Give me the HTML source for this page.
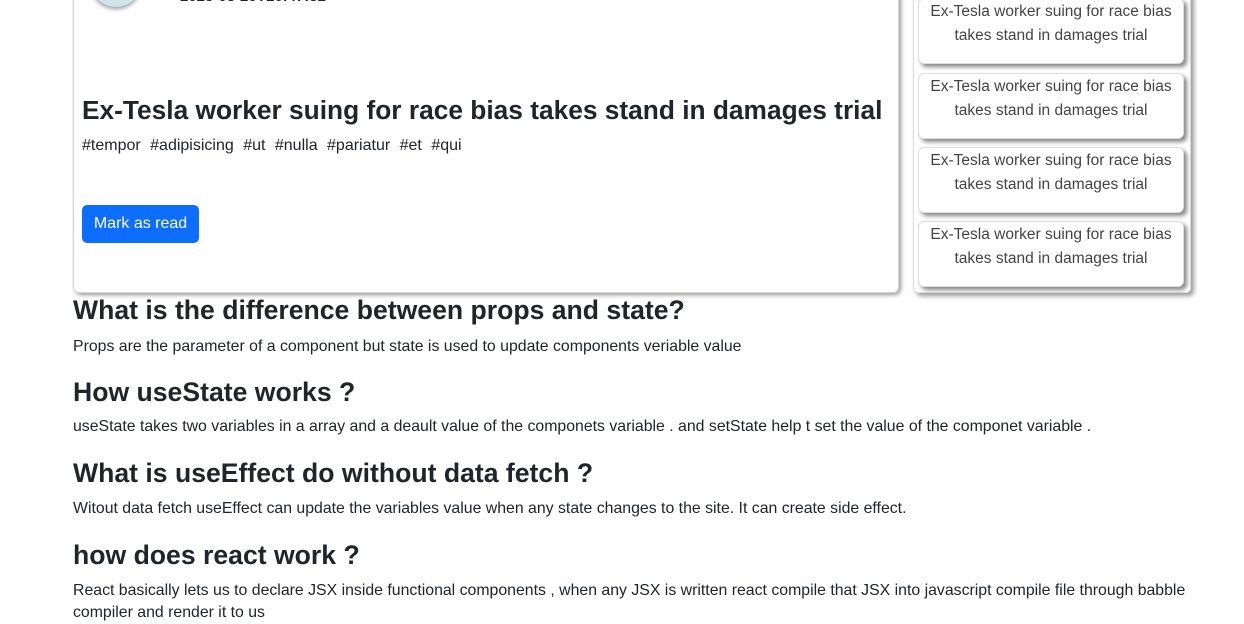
<html><head><style>
body{margin:0;width:1244px;height:619px;overflow:hidden;font-family:"Liberation Sans",sans-serif;color:#212529;background:#fff;position:relative}
.card{position:absolute;left:73px;top:-20px;width:824px;height:311px;border:1px solid #d6d6d6;border-radius:6px;box-shadow:2px 2px 4px #999}
.av{position:absolute;left:90px;top:-45px;width:52px;height:52px;border-radius:50%;background:#cfe3ec;box-shadow:0 2px 4px #999}
.date{position:absolute;left:180px;top:-12px;font-size:15px;font-weight:bold}
h1{position:absolute;left:82px;top:95px;margin:0;font-size:26.3px;font-weight:bold}
.tags{position:absolute;left:82px;top:137px;font-size:16px;word-spacing:5px}
.btn{position:absolute;left:82px;top:205px;width:117px;height:38px;background:#0d6efd;color:#fff;border-radius:5px;font-size:16px;line-height:38px;text-align:center}
.side{position:absolute;left:913px;top:-10px;width:276px;height:301px;border:1px solid #ddd;border-radius:5px;box-shadow:3px 3px 5px #999}
.it{position:absolute;left:918px;width:264px;height:64px;border:1px solid #ddd;border-radius:6px;box-shadow:3px 3px 4px #888;text-align:center;font-size:15.5px;line-height:24px;color:#444;background:#fff}
.it span{display:block;padding-top:1px}
h2{position:absolute;left:73px;margin:0;font-size:26.6px;font-weight:bold}
p{position:absolute;left:73px;margin:0;font-size:15.85px;width:1135px;line-height:22px}
</style></head><body>
<div class="card"></div>
<div class="av"></div>
<div class="date">2023-03-25T16:47:32</div>
<h1>Ex-Tesla worker suing for race bias takes stand in damages trial</h1>
<div class="tags">#tempor #adipisicing #ut #nulla #pariatur #et #qui</div>
<div class="btn">Mark as read</div>
<div class="side"></div>
<div class="it" style="top:-2px"><span>Ex-Tesla worker suing for race bias<br>takes stand in damages trial</span></div>
<div class="it" style="top:73px"><span>Ex-Tesla worker suing for race bias<br>takes stand in damages trial</span></div>
<div class="it" style="top:147px"><span>Ex-Tesla worker suing for race bias<br>takes stand in damages trial</span></div>
<div class="it" style="top:221px"><span>Ex-Tesla worker suing for race bias<br>takes stand in damages trial</span></div>
<h2 style="top:295px">What is the difference between props and state?</h2>
<p style="top:336px">Props are the parameter of a component but state is used to update components veriable value</p>
<h2 style="top:377px">How useState works ?</h2>
<p style="top:416px">useState takes two variables in a array and a deault value of the componets variable . and setState help t set the value of the componet variable .</p>
<h2 style="top:458px">What is useEffect do without data fetch ?</h2>
<p style="top:498px">Witout data fetch useEffect can update the variables value when any state changes to the site. It can create side effect.</p>
<h2 style="top:540px">how does react work ?</h2>
<p style="top:580px">React basically lets us to declare JSX inside functional components , when any JSX is written react compile that JSX into javascript compile file through babble compiler and render it to us</p>
</body></html>
